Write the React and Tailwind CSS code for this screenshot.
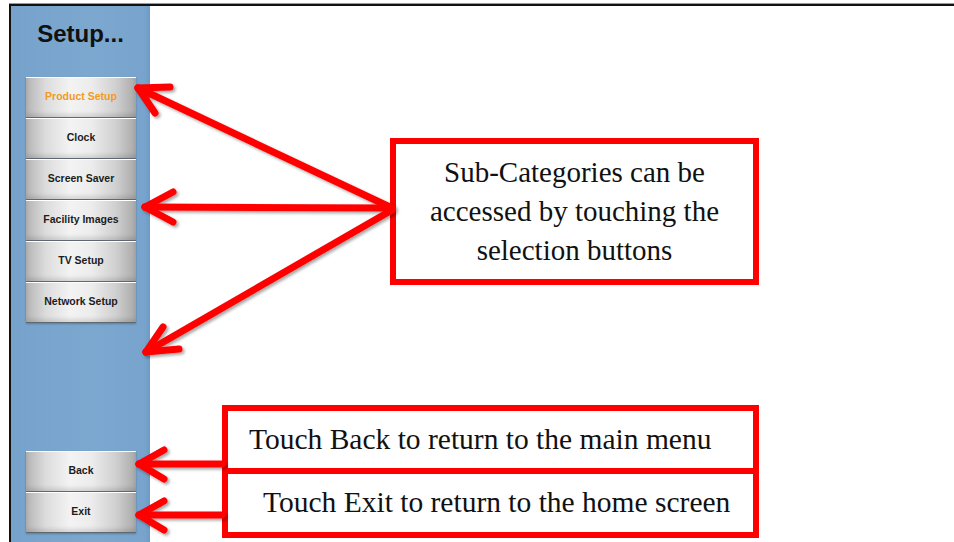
import React from "react";

const btnBase =
  "h-[41px] w-[110px] flex items-center justify-center border-b border-[#5f6870] text-[10.5px] font-bold bg-[linear-gradient(90deg,#b4b4b4_0%,#dcdcdc_18%,#f3f3f3_40%,#ececec_60%,#cfcfcf_82%,#a9a9a9_100%)] shadow-[inset_0_1px_0_#ffffff,inset_0_-3px_4px_rgba(0,0,0,0.12)]";

function Btn({ label, active }) {
  return (
    <div className={btnBase + (active ? " text-[#f29a22]" : " text-[#1c1c1c]")}>{label}</div>
  );
}

function Arrow({ x1, y1, x2, y2, a1, a2 }) {
  return (
    <g>
      <line x1={x1} y1={y1} x2={x2} y2={y2} />
      <line x1={x2} y1={y2} x2={a1[0]} y2={a1[1]} />
      <line x1={x2} y1={y2} x2={a2[0]} y2={a2[1]} />
    </g>
  );
}

export default function App() {
  return (
    <div className="relative w-[954px] h-[542px] bg-white overflow-hidden font-['Liberation_Sans',Arial,sans-serif]">
      <div className="pt-[3px] pl-[9px] h-full">
        <div className="border-t border-[#9a9a9a]">
          <div className="flex h-[538px] border-t-2 border-l-2 border-[#111]">
            {/* Sidebar */}
            <div className="w-[139px] h-full flex flex-col bg-[linear-gradient(90deg,#76a2cb_0%,#7ca8d0_60%,#77a3cc_96%,#6e9bc5_100%)] pl-[15px] pb-[9px]">
              <div className="pt-[14px] pr-[15px] text-center text-[24px] leading-[28px] font-bold text-[#111]">
                Setup...
              </div>
              <div className="mt-[29px] flex flex-col shadow-[0_1px_2px_rgba(0,0,0,0.25)] w-[110px]">
                <Btn label="Product Setup" active />
                <Btn label="Clock" />
                <Btn label="Screen Saver" />
                <Btn label="Facility Images" />
                <Btn label="TV Setup" />
                <Btn label="Network Setup" />
              </div>
              <div className="mt-auto flex flex-col shadow-[0_1px_2px_rgba(0,0,0,0.25)] w-[110px]">
                <Btn label="Back" />
                <Btn label="Exit" />
              </div>
            </div>

            {/* Main area */}
            <div className="flex-1 flex flex-col font-['Liberation_Serif','Times_New_Roman',serif] text-[#111]">
              <div className="mt-[132px] ml-[240px] w-[369px] h-[147px] border-[6px] border-[#ff0000] flex items-center justify-center text-center text-[29px] leading-[39px]">
                <div>
                  Sub-Categories can be
                  <br />
                  accessed by touching the
                  <br />
                  selection buttons
                </div>
              </div>
              <div className="mt-auto mb-[4px] ml-[72px] w-[537px] border-[6px] border-[#ff0000] flex flex-col text-[29.5px]">
                <div className="h-[57px] flex items-center pl-[21px] leading-none">
                  Touch Back to return to the main menu
                </div>
                <div className="h-[64px] border-t-[6px] border-[#ff0000] flex items-center pl-[35px] leading-none">
                  Touch Exit to return to the home screen
                </div>
              </div>
            </div>
          </div>
        </div>
      </div>

      {/* Arrow annotations */}
      <svg className="absolute inset-0 pointer-events-none" width="954" height="542" viewBox="0 0 954 542">
        <defs>
          <filter id="sh" x="-20%" y="-20%" width="140%" height="140%">
            <feDropShadow dx="2" dy="2" stdDeviation="1.5" floodColor="#000" floodOpacity="0.35" />
          </filter>
        </defs>
        <g stroke="#ff0000" strokeWidth="7" strokeLinecap="round" fill="none" filter="url(#sh)">
          <Arrow x1={392} y1={208} x2={138} y2={88} a1={[170, 87]} a2={[155, 113]} />
          <Arrow x1={392} y1={208} x2={145} y2={207} a1={[173, 192]} a2={[173, 222]} />
          <Arrow x1={392} y1={210} x2={146} y2={352} a1={[163, 327]} a2={[179, 349]} />
          <Arrow x1={222} y1={464} x2={139} y2={464} a1={[164, 450]} a2={[164, 479]} />
          <Arrow x1={222} y1={515} x2={139} y2={515} a1={[164, 501]} a2={[164, 530]} />
        </g>
      </svg>
    </div>
  );
}
